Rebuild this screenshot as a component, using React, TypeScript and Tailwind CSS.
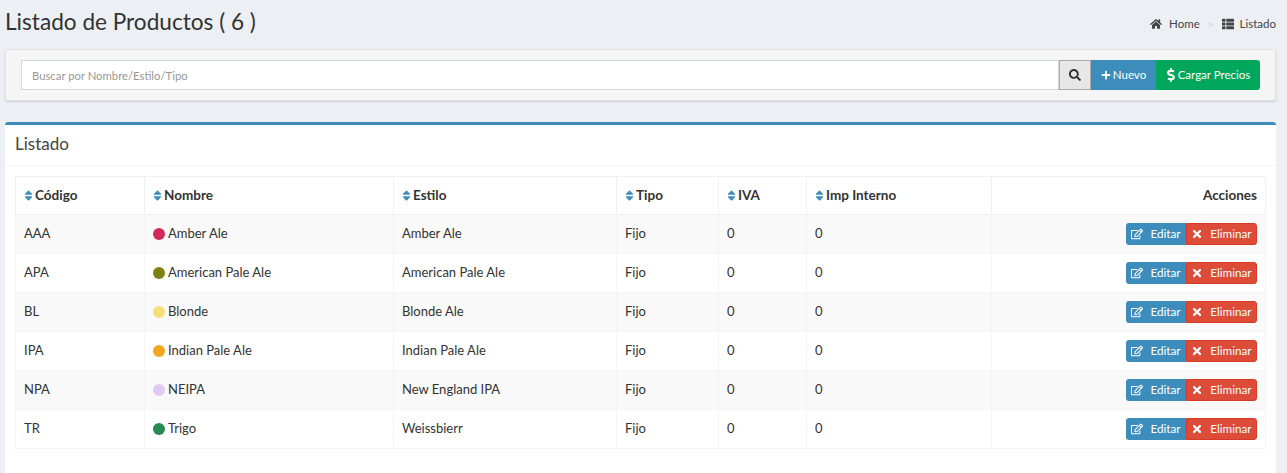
import { FaHome, FaThList, FaSearch, FaPlus, FaDollarSign, FaRegEdit, FaTimes, FaSort } from "react-icons/fa";

const productos = [
  { codigo: "AAA", nombre: "Amber Ale", color: "bg-[#d32a5e]", estilo: "Amber Ale" },
  { codigo: "APA", nombre: "American Pale Ale", color: "bg-[#7f8210]", estilo: "American Pale Ale" },
  { codigo: "BL", nombre: "Blonde", color: "bg-[#f7dc7a]", estilo: "Blonde Ale" },
  { codigo: "IPA", nombre: "Indian Pale Ale", color: "bg-[#f2a71f]", estilo: "Indian Pale Ale" },
  { codigo: "NPA", nombre: "NEIPA", color: "bg-[#e0c9f5]", estilo: "New England IPA" },
  { codigo: "TR", nombre: "Trigo", color: "bg-[#268a52]", estilo: "Weissbierr" },
];

const columnas = [
  { titulo: "Código", ancho: "w-[129px]" },
  { titulo: "Nombre", ancho: "w-[249px]" },
  { titulo: "Estilo", ancho: "w-[223px]" },
  { titulo: "Tipo", ancho: "w-[102px]" },
  { titulo: "IVA", ancho: "w-[88px]" },
  { titulo: "Imp Interno", ancho: "w-[185px]" },
];

const App = () => {
  return (
    <div className="h-[473px] overflow-hidden bg-[#ecf0f5] pl-[5px] pr-[11px] font-['Lato',sans-serif] text-[#333]">
      <div className="flex h-[49px] items-start justify-between">
        <h1 className="mt-[6px] text-[22.6px] leading-[32px] text-[#333]">Listado de Productos ( 6 )</h1>
        <div className="mt-[16px] flex items-center text-[11.5px] leading-[16px] text-[#444]">
          <FaHome className="mr-[7px] text-[12px]" />
          <span>Home</span>
          <span className="mx-[8px] text-[10px] text-[#ccc]">&gt;</span>
          <FaThList className="mr-[6px] text-[12px]" />
          <span>Listado</span>
        </div>
      </div>

      <div className="flex h-[52px] items-center rounded-[3px] border border-[#e3e3e3] bg-[#f5f5f5] px-[15px] shadow-[0_1px_2px_rgba(0,0,0,0.15)]">
        <div className="flex h-[30px] min-w-0 flex-1 items-center border border-[#d2d6de] bg-white pl-[10px] pt-[2px] text-[11.3px] text-[#999]">
          Buscar por Nombre/Estilo/Tipo
        </div>
        <button className="flex h-[30px] w-[32px] items-center justify-center border border-[#aaa] bg-[#e7e7e7] text-[#333]">
          <FaSearch className="text-[12px]" />
        </button>
        <button className="flex h-[30px] w-[65px] items-center justify-center gap-[2px] bg-[#3c8dbc] text-[11.5px] text-white">
          <FaPlus className="text-[10px]" />
          Nuevo
        </button>
        <button className="flex h-[30px] w-[104px] items-center justify-center rounded-r-[3px] bg-[#00a65a] pr-[2px] text-[11.5px] text-white">
          <FaDollarSign className="text-[14px]" />
          Cargar Precios
        </button>
      </div>

      <div className="mt-[21px] h-[351px] rounded-t-[3px] border-t-[3px] border-[#3c8dbc] bg-white">
        <div className="flex h-[41px] items-center border-b border-[#f4f4f4] px-[10px] pb-[2px] text-[17px] text-[#444]">Listado</div>
        <div className="px-[10px] pt-[10px]">
          <table className="w-full table-fixed border-collapse border border-[#f4f4f4] text-[13px]">
            <colgroup>
              {columnas.map((c) => (
                <col key={c.titulo} className={c.ancho} />
              ))}
              <col />
            </colgroup>
            <thead>
              <tr className="h-[38px] text-[13.5px]">
                {columnas.map((c) => (
                  <th key={c.titulo} className="border border-[#f0f0f0] px-[8px] text-left font-bold">
                    <span className="flex items-center">
                      <FaSort className="-ml-[2px] text-[13px] text-[#3c8dbc]" />
                      {c.titulo}
                    </span>
                  </th>
                ))}
                <th className="border border-[#f0f0f0] px-[8px] text-right font-bold">Acciones</th>
              </tr>
            </thead>
            <tbody>
              {productos.map((p, index) => (
                <tr key={p.codigo} className={index % 2 === 0 ? "h-[39px] bg-[#f9f9f9]" : "h-[39px] bg-white"}>
                  <td className="border border-[#f4f4f4] px-[8px]">{p.codigo}</td>
                  <td className="border border-[#f4f4f4] px-[8px]">
                    <span className="flex items-center gap-[3px]">
                      <span className={`h-[12px] w-[12px] rounded-full ${p.color}`} />
                      {p.nombre}
                    </span>
                  </td>
                  <td className="border border-[#f4f4f4] px-[8px]">{p.estilo}</td>
                  <td className="border border-[#f4f4f4] px-[8px]">Fijo</td>
                  <td className="border border-[#f4f4f4] px-[8px]">0</td>
                  <td className="border border-[#f4f4f4] px-[8px]">0</td>
                  <td className="border border-[#f4f4f4] px-[8px]">
                    <div className="flex justify-end">
                      <button className="flex h-[22px] w-[60px] items-center justify-center gap-[7px] rounded-l-[3px] bg-[#3c8dbc] text-[11.7px] text-white">
                        <FaRegEdit className="text-[12px]" />
                        Editar
                      </button>
                      <button className="flex h-[22px] w-[71px] items-center justify-center gap-[7px] rounded-r-[3px] border border-[#d73925] bg-[#dd4b39] text-[11.7px] text-white">
                        <FaTimes className="text-[12px]" />
                        Eliminar
                      </button>
                    </div>
                  </td>
                </tr>
              ))}
            </tbody>
          </table>
        </div>
      </div>
    </div>
  );
};

export default App;
